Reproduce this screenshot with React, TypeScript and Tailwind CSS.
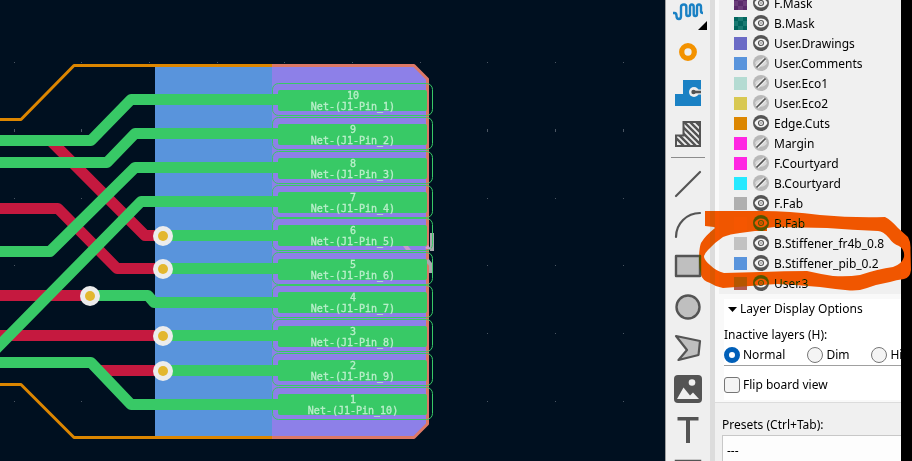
import React from "react";

type Layer = { name: string; color: string; on: boolean; alt?: string };

const layers: Layer[] = [
  { name: "F.Mask", color: "#5a2a6b", alt: "#6b3d7a", on: true },
  { name: "B.Mask", color: "#02665e", alt: "#1a7a72", on: true },
  { name: "User.Drawings", color: "#6b6bc6", on: true },
  { name: "User.Comments", color: "#5994dc", on: false },
  { name: "User.Eco1", color: "#b4dbd2", on: false },
  { name: "User.Eco2", color: "#d8c852", on: false },
  { name: "Edge.Cuts", color: "#dc8600", on: true },
  { name: "Margin", color: "#ff26e2", on: false },
  { name: "F.Courtyard", color: "#ff26e2", on: false },
  { name: "B.Courtyard", color: "#26e9ff", on: false },
  { name: "F.Fab", color: "#afafaf", on: true },
  { name: "B.Fab", color: "#ff5a00", on: true },
  { name: "B.Stiffener_fr4b_0.8", color: "#c2c2c2", on: true },
  { name: "B.Stiffener_pib_0.2", color: "#5994dc", on: true },
  { name: "User.3", color: "#b45a50", on: true },
];

const pads = [101, 135, 169, 203, 236, 270, 303, 337, 371, 405];
const greenTraces = [
  "M0 140.500H91L131 99.500H280",
  "M0 162.500H107L135 133.500H280",
  "M0 251.500H50L135 167.500H280",
  "M-4 349L141 201.500H280",
  "M163 235.500H280",
  "M163 268.500H280",
  "M90 295.500H148L154 302.500H280",
  "M163 335.500H280",
  "M163 370.500H280",
  "M0 362.500H91L131 404.500H280",
];
const redTraces = [
  "M50 140L145 235.500H163",
  "M0 208.500H58L117 268.500H163",
  "M0 295.500H90",
  "M0 335.500H163",
  "M98 370.500H163",
];
const vias = [[163, 236], [163, 269], [90, 296], [163, 336], [163, 371]];

function Board() {
  return (
    <svg className="block h-full w-full" viewBox="0 0 665 461" preserveAspectRatio="xMinYMin slice" aria-label="Board canvas">
      {[14, 81, 149, 217, 284, 352, 420, 487, 555, 623].map((x) => (
        <g key={x} fill="#4a5562">
          {[62, 198, 265, 333, 401].map((y) => <rect key={y} x={x} y={y} width="1" height="1" />)}
          <rect x={x} y="129" width="1" height="3" />
        </g>
      ))}
      <rect x="155" y="66" width="118" height="371" fill="#5994dc" />
      <path d="M272 66H415L428 79V424L415 437H272Z" fill="#8d80e8" />
      <g fill="none" stroke="#c5193f" strokeWidth="11" strokeLinejoin="round">
        {redTraces.map((d) => <path key={d} d={d} />)}
      </g>
      <g fill="none" stroke="#38c966" strokeWidth="11" strokeLinejoin="round">
        {greenTraces.map((d) => <path key={d} d={d} />)}
      </g>
      <g fill="none" strokeWidth="3" strokeLinejoin="round">
        <path d="M0 119.500H21L74 65.500H273M0 384.500H21L74 437.500H273" stroke="#dc8600" />
        <path d="M272 65.500H414L427.500 79V424L414 437.500H272" stroke="#dc7866" />
      </g>
      {vias.map(([x, y]) => (
        <g key={`${x}-${y}`}>
          <circle cx={x} cy={y} r="10" fill="#ececec" />
          <circle cx={x} cy={y} r="5" fill="#e3b72e" />
        </g>
      ))}
      <path d="M432 233V251" stroke="#a8a8ac" strokeWidth="4" />
      <path d="M427 260L431 265V273" fill="none" stroke="#a8a8ac" strokeWidth="4" />
      {pads.map((y, i) => (
        <g key={y}>
          <rect x="272.500" y={y - 17.5} width="160" height="32" rx="6" fill="none" stroke="#38c966" />
          <rect x="278" y={y - 11} width="149" height="21" rx="2" fill="#38c966" />
          <g fill="#b9efca" stroke="#b9efca" strokeWidth=".3" fontFamily="'DejaVu Sans Mono', 'Liberation Mono', monospace" fontSize="10" textAnchor="middle">
            <text x="353" y={y - 2}>{10 - i}</text>
            <text x="353" y={y + 9}>{`Net-(J1-Pin_${i + 1})`}</text>
          </g>
        </g>
      ))}
      <path d="M403 246H408L411 250H406Z" fill="#c79ad0" />
      <path d="M425 248L428 245L431 249H427Z" fill="#d0a0d0" />
    </svg>
  );
}

function Eye({ on }: { on: boolean }) {
  return (
    <svg className="size-4 shrink-0" viewBox="0 0 16 16">
      <circle cx="8" cy="8" r="8" fill={on ? "#545454" : "#b9b9b9"} />
      {on ? (
        <g>
          <path d="M1.500 8C4 2 12 2 14.500 8C12 14 4 14 1.500 8Z" fill="#f4f4f4" />
          <circle cx="8" cy="8" r="2.500" fill="#f4f4f4" stroke="#545454" strokeWidth="1.200" />
          <circle cx="8" cy="8" r=".7" fill="#545454" />
        </g>
      ) : (
        <g>
          <path d="M2 8C4 3 12 3 14 8C12 13 4 13 2 8Z" fill="#d8d8d8" />
          <path d="M4 12L12 4" stroke="#ececec" strokeWidth="4" />
          <path d="M3.500 12.500L12.500 3.500" stroke="#545454" strokeWidth="1.600" />
        </g>
      )}
    </svg>
  );
}

function Swatch({ color, alt }: { color: string; alt?: string }) {
  return (
    <svg className="h-[13px] w-[13px] shrink-0" viewBox="0 0 13 13">
      <rect width="13" height="13" fill={color} />
      {alt && <path d="M4 0H9V4H13V9H9V13H4V9H0V4H4Z M4 4V9H9V4Z" fillRule="evenodd" fill={alt} />}
    </svg>
  );
}

type Tool = { label: string; art: React.ReactNode };

const editTools: Tool[] = [
  {
    label: "Tune length",
    art: (
      <>
        <path d="M0 17H1.500Q3.500 17 3.500 20Q3.500 23 6 23Q8 23 8 20V11Q8 8.500 11 8.500Q13.300 8.500 13.300 11V18Q13.300 20 15 20Q17 20 17 18V11Q17 8.500 18.800 8.500Q20.700 8.500 20.700 11V18Q20.700 20 22.300 20Q24 20 24 18V11Q24 8.500 26 8.500Q28 8.500 28 11V15Q28 17 30 17" fill="none" stroke="#1a81c4" strokeWidth="2.400" />
        <path d="M34 25V34H25Z" fill="#000" />
      </>
    ),
  },
  { label: "Add via", art: <circle cx="15" cy="15" r="6.300" fill="none" stroke="#f39200" strokeWidth="5.300" /> },
  {
    label: "Add zone",
    art: (
      <>
        <path d="M10 2H28V28H2V16H10Z" fill="#1a81c4" />
        <circle cx="21" cy="14" r="5" fill="#efefef" />
        <path d="M21 14H28" stroke="#efefef" strokeWidth="5" />
        <path d="M21 14H28" stroke="#545454" strokeWidth="2.600" />
        <circle cx="20.500" cy="14" r="2.200" fill="#545454" />
      </>
    ),
  },
  {
    label: "Add rule area",
    art: (
      <>
        <clipPath id="rule-area"><path d="M10 2H28V28H2V16H10Z" /></clipPath>
        <path clipPath="url(#rule-area)" d="M-16 0L16 32M-10 0L22 32M-4 0L28 32M2 0L34 32M8 0L40 32M14 0L46 32M20 0L52 32" stroke="#545454" strokeWidth="2.400" />
        <path d="M10.500 3H27V27H3V16.500H10.500Z" fill="none" stroke="#545454" strokeWidth="2" />
      </>
    ),
  },
];

const drawTools: Tool[] = [
  { label: "Draw line", art: <path d="M3 27L27 3" stroke="#545454" strokeWidth="2.200" strokeLinecap="round" /> },
  { label: "Draw arc", art: <path d="M3 27A24 24 0 0 1 27 3" fill="none" stroke="#545454" strokeWidth="2.200" strokeLinecap="round" /> },
  { label: "Draw rectangle", art: <rect x="3" y="5" width="24" height="20" fill="#bfbfbf" stroke="#545454" strokeWidth="2.400" strokeLinejoin="round" /> },
  { label: "Draw circle", art: <circle cx="15" cy="15" r="11.500" fill="#bfbfbf" stroke="#545454" strokeWidth="2.400" /> },
  { label: "Draw polygon", art: <path d="M3 3L27 8L25.500 22L5.500 27L14 17Z" fill="#bfbfbf" stroke="#545454" strokeWidth="2.200" strokeLinejoin="round" /> },
  {
    label: "Place image",
    art: (
      <>
        <rect x="1" y="1" width="28" height="28" rx="4" fill="#545454" />
        <circle cx="19" cy="8.500" r="3.300" fill="#f0f0f0" />
        <path d="M4 25L10.500 13.500L17 21.500L20 18.500L26 25Z" fill="#f0f0f0" />
      </>
    ),
  },
  { label: "Place text", art: <path d="M4.500 2H25.500V5.500H17V28H13V5.500H4.500Z" fill="#545454" /> },
  { label: "Place text box", art: <rect x="3" y="5" width="24" height="20" fill="none" stroke="#545454" strokeWidth="2.500" /> },
];

function ToolButton({ label, art }: Tool) {
  return (
    <button aria-label={label} className="flex h-[41px] w-full shrink-0 items-center justify-center">
      <svg className="size-[30px] overflow-visible" viewBox="0 0 30 30">{art}</svg>
    </button>
  );
}

const markerPath =
  "M17 11L72 11Q100 11 132 15Q165 18 197 17Q203 20 210 28L220 37Q223 42 222.500 50L223 70Q222 78 216 79Q208 80 202 82Q190 84 179 88Q171 91 162 90.500Q148 89 132 87Q110 85 89 84Q60 86 35 88Q28 87 22 83Q14 80 13 75Q11 68 11 60Q11 48 13 43Q17 36 27 28L26 27L17 26Z" +
  "M52 33Q42 34 35 37Q26 43 20 50Q16 54 16 57Q17 61 22 65Q28 71 36 73L72 72Q95 71 119 71Q132 74 145 76Q160 77 172 75Q190 69 205 67Q214 64 216 57Q217 50 211 46Q205 44 201 38Q195 31 190 31Q165 30 139 28L87 27L79 28V31H67Z";

function Marker({ className }: { className: string }) {
  return (
    <svg className={className} viewBox="0 0 224 100">
      <path d={markerPath} fill="#f55600" fillRule="evenodd" />
    </svg>
  );
}

const modes = ["Normal", "Dim", "Hide"];

export default function App() {
  return (
    <main className="relative flex h-screen w-full overflow-hidden bg-black font-['Noto_Sans','Open_Sans',sans-serif] text-[12px] leading-5 text-black">
      <section className="min-w-0 flex-1 bg-[#001020]"><Board /></section>

      <nav className="w-[45px] shrink-0 overflow-hidden border-l border-[#a0a0a0] bg-[#efefef]">
        <div className="-mt-[10px] flex flex-col">
          {editTools.map((t) => <ToolButton key={t.label} {...t} />)}
          <hr className="mx-[5px] mt-[3px] mb-[5px] border-[#8c8c8c]" />
          {drawTools.map((t) => <ToolButton key={t.label} {...t} />)}
        </div>
      </nav>

      <aside className="w-[191px] shrink-0 overflow-hidden border-l-[5px] border-[#dcdcdc] bg-[#f0f0f0]">
        <ul className="-mt-[7px] border-l-4 border-[#f9f9f9] pb-[1px]">
          {layers.map((l) => (
            <li key={l.name} className="flex h-5 items-center pl-[15px] whitespace-nowrap">
              <Swatch color={l.color} alt={l.alt} />
              <span className="mr-[5px] ml-[6px] flex"><Eye on={l.on} /></span>
              <span className="pt-px">{l.name}</span>
            </li>
          ))}
        </ul>

        <div className="border-b border-[#dcdcdc] bg-[#f9f9f9] pt-[5px] pb-[2px] pl-[9px]">
          <div className="h-[101px] bg-white whitespace-nowrap">
            <button className="flex h-5 items-center gap-[3px] pl-1">
              <svg className="h-[5px] w-[9px]" viewBox="0 0 9 5"><path d="M0 0H9L4.500 5Z" /></svg>
              Layer Display Options
            </button>
            <fieldset className="border-b border-[#a0a0a0] pt-[6px]">
              <legend className="float-left w-full">Inactive layers (H):</legend>
              <div className="flex w-[200px] clear-both items-center gap-[22px]">
                {modes.map((m) => (
                  <label key={m} className="flex h-5 items-center gap-[3px]">
                    <input
                      type="radio"
                      name="inactive"
                      defaultChecked={m === "Normal"}
                      className="size-4 appearance-none rounded-full border border-[#767676] bg-[#f4f4f4] checked:border-[5px] checked:border-[#005fb8] checked:bg-white"
                    />
                    {m}
                  </label>
                ))}
              </div>
            </fieldset>
            <label className="mt-[9px] flex h-5 items-center gap-[3px]">
              <input type="checkbox" className="size-4 appearance-none rounded-[3px] border border-[#767676] bg-[#f4f4f4]" />
              Flip board view
            </label>
          </div>
        </div>

        <div className="pt-3 pl-[7px]">
          <label htmlFor="presets">Presets (Ctrl+Tab):</label>
          <select id="presets" className="block h-8 w-[200px] appearance-none border border-[#c8c8c8] bg-[#fdfdfd] px-1">
            <option>---</option>
          </select>
        </div>
      </aside>

      <div className="w-[11px] shrink-0 bg-black" />

      <Marker className="pointer-events-none absolute top-[200px] right-0 h-[100px] w-[224px] mix-blend-darken" />
      <div className="pointer-events-none absolute top-[200px] right-0 h-[100px] w-[11px] overflow-hidden">
        <Marker className="absolute top-0 right-0 h-[100px] w-[224px] max-w-none" />
      </div>
    </main>
  );
}
